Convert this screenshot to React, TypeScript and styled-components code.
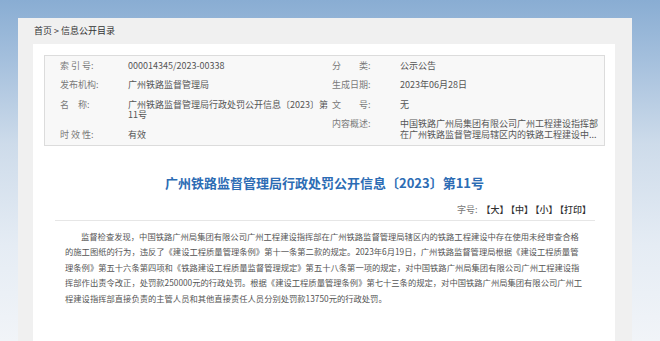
import React from 'react';
import styled, { createGlobalStyle } from 'styled-components';

const GlobalStyle = createGlobalStyle`
  html, body {
    margin: 0;
    padding: 0;
  }
  body {
    font-family: "Noto Sans CJK SC", "Noto Sans", sans-serif;
  }
  * {
    box-sizing: border-box;
  }
`;

const Page = styled.div`
  height: 341px;
  display: flex;
  flex-direction: column;
  padding: 18px 28px 0 18px;
  overflow: hidden;
  background: linear-gradient(180deg, #89add3 0%, #a5c0dd 18%, #cddbea 42%, #e5ecf4 72%, #f1f4f8 100%);
`;

const Frame = styled.div`
  flex: 1;
  display: flex;
  flex-direction: column;
  background: #f0f0f0;
  padding: 0 17px 0 15px;
`;

const Crumbs = styled.div`
  height: 26px;
  line-height: 26px;
  padding-left: 1px;
  font-size: 9px;
  color: #333;
`;

const Sheet = styled.div`
  flex: 1;
  background: #fff;
  padding: 11px 10px 0 11px;
`;

const InfoBox = styled.div`
  display: flex;
  border: 1px solid #dcdcdc;
  background: #f8f8f8;
  padding-left: 15px;
`;

const InfoColumn = styled.div<{ $width?: number }>`
  ${p => (p.$width ? `width: ${p.$width}px;` : 'flex: 1;')}
`;

const InfoRow = styled.div`
  display: flex;
  padding: 4.5px 0;
  font-size: 9px;
  line-height: 10.5px;
`;

const Label = styled.div`
  width: 68px;
  flex-shrink: 0;
  color: #7a7a7a;
  white-space: pre;
`;

const Value = styled.div<{ $width: number }>`
  width: ${p => p.$width}px;
  color: #555;
  white-space: pre-line;
`;

const Title = styled.h1`
  margin: 27px 0 0;
  font-size: 13px;
  line-height: 20px;
  font-weight: 700;
  text-align: center;
  color: #2c6cb4;
`;

const Article = styled.div`
  margin: 0 10px 0 11px;
`;

const Toolbar = styled.div`
  margin-top: 11px;
  padding: 0 4px 4px 0;
  border-bottom: 1px solid #e6e6e6;
  text-align: right;
  font-size: 9px;
  line-height: 12px;
  color: #777;
`;

const SizeLink = styled.span`
  margin-left: 2px;
  color: #333;
  font-weight: 500;
`;

const Body = styled.p`
  margin: 8px 0 0;
  padding: 0 10px;
  font-size: 8.3px;
  line-height: 15.5px;
  color: #555;
  text-indent: 16px;
  white-space: nowrap;
`;

const leftRows = [
  { label: '索 引 号:', value: '000014345/2023-00338' },
  { label: '发布机构:', value: '广州铁路监督管理局' },
  { label: '名\u3000称:', value: '广州铁路监督管理局行政处罚公开信息〔2023〕第11号' },
  { label: '时 效 性:', value: '有效' },
];

const rightRows = [
  { label: '分\u3000\u3000类:', value: '公示公告' },
  { label: '生成日期:', value: '2023年06月28日' },
  { label: '文\u3000\u3000号:', value: '无' },
  {
    label: '内容概述:',
    value: '中国铁路广州局集团有限公司广州工程建设指挥部\n在广州铁路监督管理局辖区内的铁路工程建设中...',
  },
];

const bodyLines = [
  '监督检查发现，中国铁路广州局集团有限公司广州工程建设指挥部在广州铁路监督管理局辖区内的铁路工程建设中存在使用未经审查合格',
  '的施工图纸的行为，违反了《建设工程质量管理条例》第十一条第二款的规定。2023年6月19日，广州铁路监督管理局根据《建设工程质量管',
  '理条例》第五十六条第四项和《铁路建设工程质量监督管理规定》第五十八条第一项的规定，对中国铁路广州局集团有限公司广州工程建设指',
  '挥部作出责令改正，处罚款250000元的行政处罚。根据《建设工程质量管理条例》第七十三条的规定，对中国铁路广州局集团有限公司广州工',
  '程建设指挥部直接负责的主管人员和其他直接责任人员分别处罚款13750元的行政处罚。',
];

const App: React.FC = () => {
  return (
    <Page>
      <GlobalStyle />
      <Frame>
        <Crumbs>首页 &gt; 信息公开目录</Crumbs>
        <Sheet>
          <InfoBox>
            <InfoColumn $width={272}>
              {leftRows.map(row => (
                <InfoRow key={row.label}>
                  <Label>{row.label}</Label>
                  <Value $width={200}>{row.value}</Value>
                </InfoRow>
              ))}
            </InfoColumn>
            <InfoColumn>
              {rightRows.map(row => (
                <InfoRow key={row.label}>
                  <Label>{row.label}</Label>
                  <Value $width={200}>{row.value}</Value>
                </InfoRow>
              ))}
            </InfoColumn>
          </InfoBox>
          <Title>广州铁路监督管理局行政处罚公开信息〔2023〕第11号</Title>
          <Article>
            <Toolbar>
              字号: <SizeLink>【大】</SizeLink><SizeLink>【中】</SizeLink><SizeLink>【小】</SizeLink>
              <SizeLink>【打印】</SizeLink>
            </Toolbar>
            <Body>
              {bodyLines.map((line, i) => (
                <React.Fragment key={i}>
                  {i > 0 && <br />}
                  {line}
                </React.Fragment>
              ))}
            </Body>
          </Article>
        </Sheet>
      </Frame>
    </Page>
  );
};

export default App;
